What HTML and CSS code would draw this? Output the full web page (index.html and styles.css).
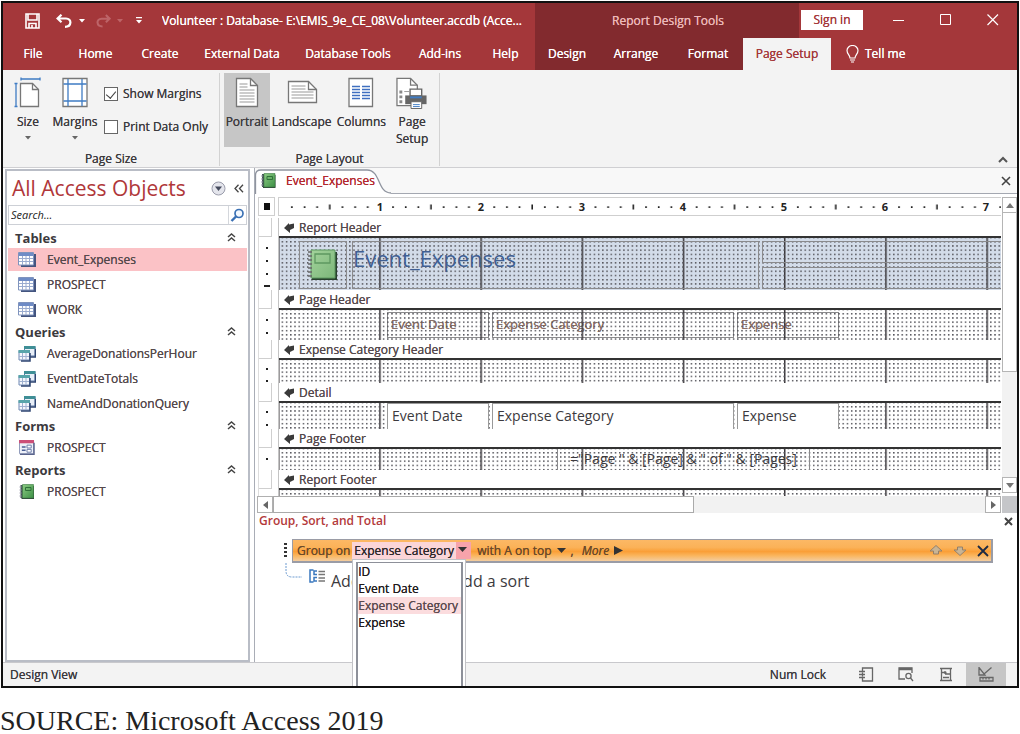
FILE: index.html
```html
<!DOCTYPE html>
<html lang="en">
<head>
<meta charset="utf-8">
<title>Volunteer : Database</title>
<link rel="stylesheet" href="styles.css">
</head>
<body>
<svg class="defs" width="0" height="0" aria-hidden="true">
  <defs>
    <pattern id="dots" x="2.6" y="3" width="4.217" height="4.217" patternUnits="userSpaceOnUse"><rect width="1.5" height="1.5" fill="#55555c"/></pattern>
    <pattern id="inches" x="-1" width="101.2" height="100" patternUnits="userSpaceOnUse"><rect width="1.5" height="100" fill="#3b383b"/></pattern>
    <pattern id="ticks" x="0" width="101.2" height="18" patternUnits="userSpaceOnUse">
      <path d="M12 8.2h1.7v1.7h-1.7zM24.7 8.2h1.7v1.7h-1.7zM37.3 8.2h1.7v1.7h-1.7zM50 6.5h1.6v5h-1.6zM62.6 8.2h1.7v1.7h-1.7zM75.3 8.2h1.7v1.7h-1.7zM87.9 8.2h1.7v1.7h-1.7z" fill="#222"/>
    </pattern>
    <linearGradient id="green" x1="0" y1="0" x2="1" y2="1"><stop offset="0" stop-color="#8ccb83"/><stop offset="1" stop-color="#3c8f45"/></linearGradient>
    <linearGradient id="palegreen" x1="0" y1="0" x2="1" y2="1"><stop offset="0" stop-color="#a3d29b"/><stop offset="1" stop-color="#7cb77a"/></linearGradient>
    <symbol id="i-table" viewBox="0 0 18 15">
      <path d="M3 2h15v13H3z" fill="#44557f"/><path d="M.5.5h15v12.5H.5z" fill="#fff" stroke="#7f93bd"/>
      <path d="M1 1h14v3H1z" fill="#6f8cc6"/><path d="M1 6.5h14M1 9.5h14M4.5 4v9M8 4v9M11.500 4v9" stroke="#9aacd0" fill="none"/>
    </symbol>
    <symbol id="i-query" viewBox="0 0 18 17">
      <path d="M6.500 1.500h10.500v9.500H6.500z" fill="#e9eff8" stroke="#5a76a6"/><path d="M6 1h11.500v3H6z" fill="#3f8f96"/>
      <path d="M17.500 4v8H9" stroke="#2f4672" fill="none" stroke-width="1.500"/>
      <path d="M1 5.500h10.500v9.500H1z" fill="#f4f7fc" stroke="#6f88b3"/><path d="M.5 5h11.500v3H.5z" fill="#58a5aa"/>
      <path d="M4.500 8v7M8 8v7M1 11.500h10" stroke="#9fb1d0"/><path d="M12 8v8H3" stroke="#2f4672" fill="none" stroke-width="1.500"/>
    </symbol>
    <symbol id="i-form" viewBox="0 0 17 16">
      <path d="M.5.5h15v14H.5z" fill="#eef1f9" stroke="#8b95b8"/><path d="M0 0h16v3.500H0z" fill="#cc4f78"/>
      <path d="M16 3v12.500H1" fill="none" stroke="#5a648c" stroke-width="1.500"/>
      <path d="M3 7.500h4M3 11h4" stroke="#4a5f95" stroke-width="1.500"/><path d="M8.500 5.500h4.500v3H8.500zM8.500 10h4.500v3H8.500z" fill="#fff" stroke="#6a7aa8"/>
    </symbol>
    <symbol id="i-book" viewBox="0 0 15 15">
      <path d="M2 2h12.500v13H2z" fill="#30443a"/><path d="M1 1h3v13H1z" fill="#455" /><path d="M3 .5h11V14H3z" fill="url(#green)" stroke="#3a7a41" stroke-width=".6"/>
      <path d="M6 3.500h5.500v3H6z" fill="none" stroke="#2f7038"/><path d="M0 3h2M0 6h2M0 9h2M0 12h2" stroke="#99a"/>
    </symbol>
    <symbol id="i-up2" viewBox="0 0 9 9"><path d="M1 4l3.500-3L8 4M1 8l3.500-3L8 8" fill="none" stroke="#444" stroke-width="1.500"/></symbol>
    <symbol id="i-sec" viewBox="0 0 11 10"><path d="M0 5L5 0V1.500L10 .5V5L6 7V10z" fill="#3a3a3a"/></symbol>
  </defs>
</svg>

<main class="window">
  <header class="head">
    <div class="titlebar">
      <div class="title-left">
        <button class="qat save" aria-label="Save"><svg width="15" height="16" viewBox="0 0 15 16" fill="none" stroke="#fff" stroke-width="1.600"><path d="M1 1h13v14H1zM3 1v6h9V1M4 15v-4.500h7V15M7 12v3"/></svg></button>
        <button class="qat undo" aria-label="Undo"><svg width="16" height="14" viewBox="0 0 16 14" fill="none" stroke="#fff" stroke-width="2.200"><path d="M5.500 .7L1.500 4.500L5.500 8.300M2 4.500h8c6 0 6 8.300-1 8.300"/></svg></button>
        <button class="qat" aria-label="Undo list"><svg width="6" height="4"><path d="M0 0h6L3 3.500z" fill="#fff"/></svg></button>
        <button class="qat redo" aria-label="Redo"><svg width="15" height="14" viewBox="0 0 16 14" fill="none" stroke="#bd6468" stroke-width="2.200"><path d="M10.500 .7L14.500 4.500L10.500 8.300M14 4.500H6c-6 0-6 8.300 1 8.300"/></svg></button>
        <button class="qat" aria-label="Redo list"><svg width="6" height="4"><path d="M0 0h6L3 3.500z" fill="#bd6468"/></svg></button>
        <button class="qat more" aria-label="Customize toolbar"><svg width="6" height="7"><path d="M0 0h6v1.300H0zM0 3h6L3 6.500z" fill="#fff"/></svg></button>
        <h1 class="doc-title">Volunteer : Database- E:\EMIS_9e_CE_08\Volunteer.accdb (Acce...</h1>
      </div>
      <div class="context">Report Design Tools</div>
      <div class="title-right">
        <button class="signin">Sign in</button>
        <button class="sys" aria-label="Minimize"><svg width="12" height="12"><path d="M0 6.500h11" stroke="#fff"/></svg></button>
        <button class="sys" aria-label="Maximize"><svg width="12" height="12"><path d="M.5.5h10v10H.5z" fill="none" stroke="#fff"/></svg></button>
        <button class="sys" aria-label="Close"><svg width="12" height="12"><path d="M.5.5l10.500 10.500M11 .5L.5 11" stroke="#fff" stroke-width="1.200"/></svg></button>
      </div>
    </div>
    <nav class="tabs">
      <button>File</button><button>Home</button><button>Create</button><button>External Data</button><button>Database Tools</button><button>Add-ins</button><button>Help</button>
      <button class="dark">Design</button><button class="dark">Arrange</button><button class="dark">Format</button><button class="on">Page Setup</button>
      <button class="tell"><svg width="13" height="18" viewBox="0 0 13 18" fill="none" stroke="#fff" stroke-width="1.200"><path d="M4 13c0-3-3-4-3-7.500a5.500 5 0 0 1 11 0C12 9 9 10 9 13zM4 15h5M5 17h3"/></svg>Tell me</button>
    </nav>
  </header>

  <section class="ribbon">
    <div class="group size-group">
      <div class="tools">
        <button class="tool w-size">
          <svg width="28" height="32" viewBox="0 0 28 32" fill="none"><path d="M6.500 6.500h12l6 6v17h-18z" fill="#fff" stroke="#777" stroke-width="1.300"/><path d="M18.500 6.500v6h6" stroke="#777" stroke-width="1.300"/><path d="M7 2h19M7 .500v3M26 .500v3M2 6.500v23M.500 6.500h3M.500 29.500h3" stroke="#3f7cc4" stroke-width="1.300"/></svg>
          <span>Size</span><svg class="caret" width="6" height="4"><path d="M0 0h6L3 3.500z" fill="#666"/></svg>
        </button>
        <button class="tool w-margins">
          <svg width="26" height="32" viewBox="0 0 26 32" fill="none"><path d="M1 1.500h24v28H1z" fill="#fff" stroke="#777" stroke-width="1.300"/><path d="M6 2v27M20 2v27M1.500 7h23M1.500 24h23" stroke="#3f7cc4" stroke-width="1.300"/></svg>
          <span>Margins</span><svg class="caret" width="6" height="4"><path d="M0 0h6L3 3.500z" fill="#666"/></svg>
        </button>
        <div class="checks">
          <label><input type="checkbox" checked>Show Margins</label>
          <label><input type="checkbox">Print Data Only</label>
        </div>
      </div>
      <h2>Page Size</h2>
    </div>
    <div class="group layout-group">
      <div class="tools">
        <button class="tool w-portrait active">
          <svg width="24" height="32" viewBox="0 0 24 32" fill="none"><path d="M1.500 1.500h14l7 7v21h-21z" fill="#fff" stroke="#777" stroke-width="1.300"/><path d="M15.500 1.500v7h7" stroke="#777" stroke-width="1.300"/><path d="M4.500 7h8M4.500 10h8M4.500 13h15M4.500 16h15M4.500 19h15M4.500 22h15M4.500 25h15" stroke="#999"/></svg>
          <span>Portrait</span>
        </button>
        <button class="tool w-landscape">
          <svg width="32" height="32" viewBox="0 0 32 32" fill="none"><path d="M2.500 4.500h20l8 8v13h-28z" fill="#fff" stroke="#777" stroke-width="1.300"/><path d="M22.500 4.500v8h8" stroke="#777" stroke-width="1.300"/><path d="M5.500 9h14M5.500 12h14M5.500 15h22M5.500 18h22M5.500 21h22" stroke="#999"/></svg>
          <span>Landscape</span>
        </button>
        <button class="tool w-columns">
          <svg width="26" height="32" viewBox="0 0 26 32" fill="none"><path d="M1 1.500h23.500v28H1z" fill="#fff" stroke="#777" stroke-width="1.300"/><path d="M4 9.500h8M4 12.500h8M4 15.500h8M4 18.500h8M4 21.500h8M14 9.500h8M14 12.500h8M14 15.500h8M14 18.500h8M14 21.500h8" stroke="#3f6fc0" stroke-width="1.400"/></svg>
          <span>Columns</span>
        </button>
        <button class="tool w-setup">
          <svg width="34" height="32" viewBox="0 0 34 33" fill="none"><path d="M1.500 1.500h14l7 7v21h-21z" fill="#fff" stroke="#777" stroke-width="1.300"/><path d="M15.500 1.500v7h7" stroke="#777" stroke-width="1.300"/><path d="M4 14h3v3H4zM4 19h3v3H4zM4 24h3v3H4z" fill="#888"/><path d="M9 15h5" stroke="#999"/><path d="M15 12.500h12v7H15z" fill="#fff" stroke="#666" stroke-width="1.400"/><path d="M10 19h22v9H10z" fill="#666"/><path d="M15 20h12v2H15z" fill="#3f7cc4"/><path d="M16 25.500h11v7H16z" fill="#fff" stroke="#666"/><path d="M18 28.500h7M18 30.500h7" stroke="#3f7cc4"/></svg>
          <span>Page<br>Setup</span>
        </button>
      </div>
      <h2>Page Layout</h2>
    </div>
    <button class="collapse" aria-label="Collapse ribbon"><svg width="10" height="7"><path d="M1 6l4-4 4 4" fill="none" stroke="#555" stroke-width="2"/></svg></button>
  </section>

  <div class="workspace">
    <aside class="nav">
      <div class="nav-head">
        <h2>All Access Objects</h2>
        <button aria-label="Choose category"><svg width="15" height="15"><circle cx="7.500" cy="7.500" r="6.500" fill="#e4e5ec" stroke="#9a9cab"/><path d="M4 5.500h7L7.500 10z" fill="#444a5c"/></svg></button>
        <button aria-label="Close pane"><svg width="10" height="9"><path d="M4.500 .700L1 4.500l3.500 3.800M9 .700L5.500 4.500 9 8.300" fill="none" stroke="#444" stroke-width="1.300"/></svg></button>
      </div>
      <div class="search">
        <input type="text" placeholder="Search..." aria-label="Search">
        <button aria-label="Search"><svg width="15" height="14"><circle cx="9" cy="5.500" r="4" fill="#f4f9ff" stroke="#3a70b4" stroke-width="1.700"/><path d="M6 8.500L1.500 13" stroke="#3a70b4" stroke-width="2.400"/></svg></button>
      </div>
      <div class="tree">
        <h3>Tables<svg width="9" height="9"><use href="#i-up2"/></svg></h3>
        <ul>
          <li class="sel"><svg width="18" height="15"><use href="#i-table"/></svg>Event_Expenses</li>
          <li><svg width="18" height="15"><use href="#i-table"/></svg>PROSPECT</li>
          <li><svg width="18" height="15"><use href="#i-table"/></svg>WORK</li>
        </ul>
        <h3>Queries<svg width="9" height="9"><use href="#i-up2"/></svg></h3>
        <ul>
          <li><svg width="18" height="17"><use href="#i-query"/></svg>AverageDonationsPerHour</li>
          <li><svg width="18" height="17"><use href="#i-query"/></svg>EventDateTotals</li>
          <li><svg width="18" height="17"><use href="#i-query"/></svg>NameAndDonationQuery</li>
        </ul>
        <h3>Forms<svg width="9" height="9"><use href="#i-up2"/></svg></h3>
        <ul><li><svg width="18" height="15"><use href="#i-form"/></svg>PROSPECT</li></ul>
        <h3>Reports<svg width="9" height="9"><use href="#i-up2"/></svg></h3>
        <ul><li><svg width="18" height="15"><use href="#i-book"/></svg>PROSPECT</li></ul>
      </div>
    </aside>

    <section class="main">
      <div class="doc-tabs">
        <button class="doc-tab">
          <svg class="tab-shape" width="136" height="25"><path d="M.5 25V6Q.5 1 6 1H112C126 1 122 24 136 24V25z" fill="#fff"/><path d="M.5 25V6Q.5 1 6 1H112C126 1 122 24 136 24" fill="none" stroke="#8f949f" stroke-width="1.300"/></svg>
          <svg class="tab-icon" width="15" height="15"><use href="#i-book"/></svg><span>Event_Expenses</span>
        </button>
        <button class="doc-close" aria-label="Close document"><svg width="10" height="10"><path d="M1 1l8 8M9 1L1 9" stroke="#444" stroke-width="1.600"/></svg></button>
      </div>

      <div class="designer">
        <div class="canvas">
          <div class="ruler-row">
            <div class="corner"></div>
            <svg class="ruler" height="18"><rect width="100%" height="18" fill="url(#ticks)"/>
              <g class="ruler-num"><text x="101" y="13">1</text><text x="202" y="13">2</text><text x="303" y="13">3</text><text x="404" y="13">4</text><text x="505" y="13">5</text><text x="606" y="13">6</text><text x="707" y="13">7</text></g></svg>
          </div>
          <div class="sections">
            <section class="band">
              <div class="vr"><i></i><svg width="14" height="52"><path d="M7 10h2v2H7zM7 23h2v2H7zM7 36h2v2H7zM5 48h6v2H5z" fill="#222"/></svg></div>
              <div class="surface">
                <h4><svg width="11" height="10"><use href="#i-sec"/></svg>Report Header</h4>
                <div class="area a-rh">
                  <svg class="grid"><rect width="100%" height="100%" fill="url(#inches)"/><rect width="100%" height="100%" fill="url(#dots)"/></svg>
                  <div class="ctl c-logo"><svg width="30" height="32" viewBox="0 0 30 32"><path d="M4 3h25v28H4z" fill="#27402d"/><path d="M3 1h24v28H3z" fill="url(#palegreen)" stroke="#5d9860"/><path d="M7 5h15v9H7z" fill="none" stroke="#5d9860" stroke-width="1.300"/><path d="M0 3h4M0 7h4M0 11h4M0 15h4M0 19h4M0 23h4M0 27h4" stroke="#666" stroke-width="1.500"/></svg></div>
                  <div class="ctl c-title">Event_Expenses</div>
                  <div class="ctl c-date"></div>
                  <div class="ctl c-time"></div>
                </div>
              </div>
            </section>
            <section class="band">
              <div class="vr"><i></i><svg width="14" height="30"><path d="M7 10h2v2H7zM7 23h2v2H7z" fill="#222"/></svg></div>
              <div class="surface">
                <h4><svg width="11" height="10"><use href="#i-sec"/></svg>Page Header</h4>
                <div class="area a-ph">
                  <div class="ctl lbl f1">Event Date</div><div class="ctl lbl f2">Expense Category</div><div class="ctl lbl f3">Expense</div>
                  <svg class="grid"><rect width="100%" height="100%" fill="url(#inches)"/><rect width="100%" height="100%" fill="url(#dots)"/></svg>
                </div>
              </div>
            </section>
            <section class="band">
              <div class="vr"><i></i><svg width="14" height="23"><path d="M7 9h2v2H7zM7 21h2v2H7z" fill="#222"/></svg></div>
              <div class="surface">
                <h4><svg width="11" height="10"><use href="#i-sec"/></svg>Expense Category Header</h4>
                <div class="area a-eh"><svg class="grid"><rect width="100%" height="100%" fill="url(#inches)"/><rect width="100%" height="100%" fill="url(#dots)"/></svg></div>
              </div>
            </section>
            <section class="band">
              <div class="vr"><i></i><svg width="14" height="26"><path d="M7 9h2v2H7zM7 22h2v2H7z" fill="#222"/></svg></div>
              <div class="surface">
                <h4><svg width="11" height="10"><use href="#i-sec"/></svg>Detail</h4>
                <div class="area a-dt">
                  <svg class="grid"><rect width="100%" height="100%" fill="url(#inches)"/><rect width="100%" height="100%" fill="url(#dots)"/></svg>
                  <div class="ctl box f1">Event Date</div><div class="ctl box f2">Expense Category</div><div class="ctl box f3">Expense</div>
                </div>
              </div>
            </section>
            <section class="band">
              <div class="vr"><i></i><svg width="14" height="21"><path d="M7 10h2v2H7z" fill="#222"/></svg></div>
              <div class="surface">
                <h4><svg width="11" height="10"><use href="#i-sec"/></svg>Page Footer</h4>
                <div class="area a-pf">
                  <svg class="grid"><rect width="100%" height="100%" fill="url(#inches)"/><rect width="100%" height="100%" fill="url(#dots)"/></svg>
                  <div class="ctl c-page">="Page " &amp; [Page] &amp; " of " &amp; [Pages]</div>
                </div>
              </div>
            </section>
            <section class="band">
              <div class="vr"><i></i></div>
              <div class="surface">
                <h4><svg width="11" height="10"><use href="#i-sec"/></svg>Report Footer</h4>
                <div class="area a-rf"><svg class="grid"><rect width="100%" height="100%" fill="url(#inches)"/><rect width="100%" height="100%" fill="url(#dots)"/></svg></div>
              </div>
            </section>
          </div>
        </div>
        <div class="vscroll">
          <button aria-label="Scroll up"><svg width="8" height="5"><path d="M0 5h8L4 0z" fill="#777"/></svg></button>
          <div class="vthumb"></div><div class="vtrack"></div>
          <button aria-label="Scroll down"><svg width="8" height="5"><path d="M0 0h8L4 5z" fill="#777"/></svg></button>
        </div>
        <div class="hscroll">
          <button aria-label="Scroll left"><svg width="5" height="8"><path d="M5 0v8L0 4z" fill="#666"/></svg></button>
          <div class="hthumb"></div><div class="htrack"></div>
          <button aria-label="Scroll right"><svg width="5" height="8"><path d="M0 0v8l5-4z" fill="#666"/></svg></button>
        </div>
        <div class="scroll-corner"></div>
      </div>

      <section class="sorting">
        <div class="sort-head"><h2>Group, Sort, and Total</h2><button aria-label="Close"><svg width="9" height="9"><path d="M1 1l7 7M8 1L1 8" stroke="#444" stroke-width="2"/></svg></button></div>
        <div class="level">
          <svg class="grip" width="4" height="18"><path d="M0 1h3v2H0zM0 5h3v2H0zM0 9h3v2H0zM0 13h3v2H0z" fill="#333"/></svg>
          <div class="level-bar">
            <label for="field">Group on</label>
            <div class="combo">
              <select id="field"><option>Expense Category</option></select>
              <svg class="combo-arrow" width="9" height="5"><path d="M0 0h9L4.500 5z" fill="#333"/></svg>
              <div class="popup">
                <ul role="listbox" aria-label="Fields">
                  <li role="option">ID</li><li role="option">Event Date</li><li role="option" class="hot" aria-selected="true">Expense Category</li><li role="option">Expense</li>
                </ul>
              </div>
            </div>
            <button class="order">with A on top <svg width="9" height="5"><path d="M0 0h9L4.500 5z" fill="#333"/></svg></button>
            <span class="comma">,</span>
            <button class="more-btn"><em>More</em> <svg width="9" height="9"><path d="M0 0v9l9-4.500z" fill="#333"/></svg></button>
            <span class="level-actions">
              <button aria-label="Move up"><svg width="14" height="11"><path d="M7 .500L13 6H9.500v3h-5V6H1z" fill="#c9b494" stroke="#94806a"/></svg></button>
              <button aria-label="Move down"><svg width="14" height="11"><path d="M7 10.500L13 5H9.500V2h-5v3H1z" fill="#c9b494" stroke="#94806a"/></svg></button>
              <button aria-label="Delete"><svg width="12" height="12"><path d="M1 1l10 10M11 1L1 11" stroke="#1d2a44" stroke-width="1.800"/></svg></button>
            </span>
          </div>
        </div>
        <div class="add-row">
          <svg class="elbow" width="18" height="18"><path d="M1 0v8q0 6 6 6h10" fill="none" stroke="#6d9bd0" stroke-dasharray="2 1"/></svg>
          <svg class="add-icon" width="17" height="15"><path d="M4.500 1H1v12h3.500M8 2H5v3.500h3M8 8.500H5V12h3" fill="none" stroke="#3a78bf" stroke-width="1.500"/><path d="M9.500 2.500H16M9.500 5.500H16M9.500 9H16M9.500 12H16" stroke="#777" stroke-width="1.400"/></svg>
          <button class="add-group">Add a group</button><button class="add-sort">Add a sort</button>
        </div>
      </section>
    </section>
  </div>

  <footer class="status">
    <span>Design View</span>
    <span class="numlock">Num Lock</span>
    <button class="view" aria-label="Report View"><svg width="15" height="15" fill="none" stroke="#666" stroke-width="1.300"><path d="M3.500 4V1h10v13h-10v-3M3.500 5.500v4M0 4.500h6M0 7.500h6M0 10.500h6"/></svg></button>
    <button class="view" aria-label="Print Preview"><svg width="16" height="15" fill="none" stroke="#666" stroke-width="1.300"><path d="M7 12H1V1h13v5"/><path d="M1 2h13" stroke-width="2.500"/><circle cx="10.500" cy="9" r="2.600"/><path d="M12.500 11l2.500 3"/></svg></button>
    <button class="view" aria-label="Layout View"><svg width="14" height="15" fill="none" stroke="#666" stroke-width="1.300"><path d="M1 1.500h12M1 13.500h12M2.500 1v13M11.500 1v13M2.500 5.500h5M6 4v3M6 7h6M4 10.500h6"/></svg></button>
    <button class="view on" aria-label="Design View"><svg width="16" height="15" fill="none" stroke="#666" stroke-width="1.300"><path d="M1 .500V8h6zM6 7l7.500-6.500M2 10.500h13v3.500H2zM5 11v1.500M8 11v1.500M11 11v1.500"/></svg></button>
  </footer>
</main>
<p class="source">SOURCE: Microsoft Access 2019</p>
</body>
</html>
```

FILE: styles.css
```css
* { box-sizing: border-box; }
body {
  margin: 0;
  min-height: 100vh;
  display: flex;
  flex-direction: column;
  background: #fff;
  color: #3c3a3e;
  font: 400 12px/16px "Open Sans", "Noto Sans", sans-serif;
}
h1, h2, h3, h4, p, ul { margin: 0; padding: 0; font: inherit; }
ul { list-style: none; }
button { margin: 0; padding: 0; border: 0; background: none; color: inherit; font: inherit; text-shadow: inherit; white-space: nowrap; }
svg { display: block; flex: none; }
.defs { position: absolute; }

.window {
  flex: 1;
  display: flex;
  flex-direction: column;
  margin: 1px;
  border: 2px solid #111;
  overflow: hidden;
  background: #f3f3f3;
}
/* Firmer strokes for the small interface text */
.titlebar, .tabs, .ribbon, .tree, .surface h4, .doc-tab, .sort-head, .level, .status { text-shadow: 0 0 0 currentColor; }

/* Title bar and ribbon tabs */
.head { background: #a4373a; color: #fff; }
.titlebar { display: flex; height: 35px; }
.title-left { display: flex; align-items: center; width: 532px; padding-left: 22px; }
.qat { display: flex; align-items: center; }
.undo { margin: 0 7px 0 16px; }
.redo { margin: 0 6px 0 11px; }
.more { margin: 0 20px 0 13px; }
.doc-title { overflow: hidden; white-space: nowrap; }
.context { display: flex; align-items: center; justify-content: center; width: 264px; background: #822a2e; color: #ecb9ba; padding-left: 2px; }
.title-right { flex: 1; display: flex; align-items: center; }
.signin { width: 62px; height: 20px; margin: 0 12px 2px 2px; background: #fff; color: #a4373a; }
.sys { flex: 1; display: flex; justify-content: center; padding-bottom: 2px; }
.tabs { display: grid; grid-template-columns: 60px 65px 64px 100px 112px 72px 59px 64px 74px 70px 88px 1fr; height: 32px; }
.tabs .dark { background: #822a2e; }
.tabs .on { background: #f3f3f3; color: #a4373a; }
.tabs .tell { display: flex; align-items: center; gap: 6px; padding-left: 15px; }

/* Ribbon */
.ribbon { display: flex; height: 98px; padding-top: 3px; border-bottom: 1px solid #cfcfd2; }
.group { display: flex; flex-direction: column; border-right: 1px solid #d2d2d2; margin-bottom: 1px; }
.group h2 { text-align: center; line-height: 14px; }
.size-group { width: 217px; }
.layout-group { width: 220px; }
.tools { display: flex; flex: 1; padding: 0 4px; }
.size-group .tools { padding: 0 2px; }
.tool { display: flex; flex-direction: column; align-items: center; height: 74px; padding-top: 4px; }
.tool span { line-height: 17px; margin-top: 4px; }
.tool .caret { margin-top: 6px; }
.active { background: #c6c6c6; }
.w-size { width: 46px; }
.w-margins { width: 48px; }
.w-portrait { width: 46px; }
.w-landscape { width: 64px; }
.w-columns { width: 56px; }
.w-setup { width: 46px; }
.checks { display: flex; flex-direction: column; gap: 17px; padding: 13px 0 0 5px; }
.checks label { display: flex; align-items: center; gap: 5px; white-space: nowrap; }
.checks input { position: relative; appearance: none; width: 14px; height: 14px; margin: 0; border: 1px solid #666; background: #fff; }
.checks input:checked::after { content: ""; position: absolute; left: 3px; top: 1px; width: 5px; height: 8px; border: solid #444; border-width: 0 1px 1px 0; transform: rotate(40deg); }
.collapse { margin: auto 9px 4px auto; }

/* Navigation pane */
.workspace { flex: 1; display: flex; border-bottom: 1px solid #c8c8cc; background: #fff; }
.nav { flex: none; width: 245px; margin: 1px 4px 0 2px; border: 2px solid #b9bdc6; background: #fff; }
.nav-head { display: flex; align-items: center; height: 34px; padding: 0 4px 0 5px; gap: 8px; }
.nav-head h2 { flex: 1; font-size: 21px; font-weight: 400; color: #b0373a; white-space: nowrap; }
.search { display: flex; height: 20px; margin: 0 1px 3px; border: 1px solid #cdd0d6; }
.search input { flex: 1; min-width: 0; border: 0; padding: 0 2px; font: italic 11px/16px "Open Sans", sans-serif; color: #222; outline: 0; }
.search input::placeholder { color: #222; }
.search button { width: 18px; border-left: 1px solid #d4d7dc; padding-left: 1px; }
.tree h3 { display: flex; align-items: center; justify-content: space-between; height: 19px; padding: 0 12px 0 8px; font-weight: 700; font-size: 13px; text-shadow: none; }
.tree li { display: flex; align-items: center; gap: 11px; height: 23px; margin: 1px; padding-left: 10px; color: #55494c; }
.tree ul { display: flow-root; }
.tree li + li { margin-top: 2px; }
.tree .sel { background: #fbc2c6; }

/* Document area */
.main { flex: 1; min-width: 0; display: flex; flex-direction: column; border-left: 1px solid #a9adb6; }
.doc-tabs { display: flex; justify-content: space-between; align-items: center; height: 26px; border-bottom: 1px solid #a4a8b1; background: #f8f8f8; }
.doc-tab { position: relative; display: flex; align-items: center; gap: 10px; width: 136px; height: 25px; padding-left: 6px; color: #b3282d; }
.tab-shape { position: absolute; left: 0; top: 1px; }
.tab-icon, .doc-tab span { position: relative; }
.doc-close { margin-right: 6px; }
.designer { display: grid; grid-template-columns: minmax(0, 1fr) 15px; grid-template-rows: auto 17px; padding-top: 3px; }
.canvas { padding: 0 1px 0 3px; }
.ruler-row { display: flex; gap: 3px; height: 19px; margin-bottom: 2px; }
.corner { width: 17px; border: 1px solid #cfcfcf; display: grid; place-items: center; }
.corner::before { content: ""; width: 6px; height: 7px; background: #111; }
.ruler { flex: 1; min-width: 0; height: 19px; border: 1px solid #cfcfcf; border-right: 0; }
.ruler-num { font: 700 11px "Open Sans", sans-serif; text-anchor: middle; fill: #222; }
.band { display: flex; gap: 4px; }
.vr { width: 16px; border-left: 1px solid #ddd; }
.vr i { display: block; height: 19px; border: solid #cfcfcf; border-width: 0 1px 1px 0; margin-right: 2px; }
.surface { flex: 1; min-width: 0; border-left: 1px solid #c4c4c4; }
.surface h4 { display: flex; align-items: center; gap: 4px; height: 18px; padding: 2px 0 0 5px; color: #55494c; }
.area { position: relative; overflow: hidden; border-top: 2px solid #333; background: #fff; }
.grid { position: absolute; inset: 0; width: 100%; height: 100%; }
.a-rh { height: 54px; background: #d3dce9; }
.a-ph { height: 32px; }
.a-eh { height: 25px; }
.a-dt { height: 28px; }
.a-pf { height: 23px; }
.a-rf { height: 8px; }
.ctl { position: absolute; white-space: nowrap; border: 1px solid #8a8a8c; }
.c-logo { left: 20px; top: 3px; width: 48px; height: 48px; padding: 7px 0 0 8px; }
.c-title { left: 73px; top: 3px; width: 407px; height: 48px; font-size: 22px; line-height: 32px; font-weight: 400; color: #3f5f93; }
.c-date { left: 483px; right: -2px; top: 3px; height: 22px; }
.c-time { left: 483px; right: -2px; top: 29px; height: 22px; }
.f1 { left: 108px; width: 102px; }
.f2 { left: 213px; width: 242px; }
.f3 { left: 458px; width: 102px; }
.lbl { top: 2px; height: 26px; padding-left: 3px; font-size: 13px; line-height: 22px; color: #8b6f66; text-shadow: 0 0 0 currentColor; }
.box { top: 0; height: 27px; padding-left: 4px; border-color: #999; background: #fff; font-size: 14px; line-height: 24px; }
.c-page { left: 278px; top: 0; width: 253px; height: 24px; text-align: center; font-size: 14px; line-height: 20px; border-width: 0 1px; }
.vscroll { display: flex; flex-direction: column; margin-bottom: 3px; background: #f2f2f2; }
.vscroll button { display: grid; place-items: center; height: 16px; border: 1px solid #b5b5b5; background: #fff; }
.vthumb { flex: 3; background: #fff; border: solid #b5b5b5; border-width: 0 1px 1px; }
.vtrack { flex: 2; }
.hscroll { display: flex; margin: 0 1px 0 2px; background: #f2f2f2; }
.hscroll button { display: grid; place-items: center; width: 16px; border: 1px solid #b0b0b0; background: #fff; }
.hthumb { flex: 59; border: 1px solid #aaa; background: #fff; }
.htrack { flex: 41; }
.scroll-corner { background: #c5c6c9; }

/* Group, Sort, and Total */
.sorting { padding: 0 4px; }
.sort-head { display: flex; justify-content: space-between; align-items: center; height: 16px; margin-bottom: 10px; color: #b3393a; }
.sort-head h2 { font-weight: 600; text-shadow: none; }
.level { display: flex; align-items: center; gap: 4px; margin: 0 20px 0 25px; }
.level-bar { flex: 1; min-width: 0; display: flex; align-items: center; height: 24px; padding: 0 2px 0 4px; border: 2px solid #9a9ca6; border-width: 1px 2px 2px 1px; background: linear-gradient(#fcb865, #fbb258 35%, #fa9f37 55%, #fab65f 75%, #f3cda0); color: #6b4a2a; }
.combo { position: relative; display: flex; align-items: center; width: 119px; margin: 0 6px 0 2px; }
.combo select { appearance: none; width: 100%; height: 17px; padding: 0 0 0 2px; border: 0; border-radius: 0; background: linear-gradient(90deg, #fbd5d8 104px, #f7a3ab 104px); color: #2c2729; font: inherit; line-height: 17px; text-shadow: inherit; }
.combo-arrow { position: absolute; right: 4px; top: 5px; }
.popup { position: absolute; left: 0; top: 17px; z-index: 3; width: 114px; height: 140px; padding: 2px 2px 0 3px; background: #fff; border: 1px solid #c2c2c6; }
.popup ul { height: 140px; border: 2px solid #8d9099; border-width: 1px 2px; color: #1f1b1d; }
.popup li { height: 17px; line-height: 17px; white-space: nowrap; }
.popup .hot { background: #fbdcde; color: #5a4a4e; }
.order, .more-btn { display: flex; align-items: center; gap: 5px; }
.comma { margin: 0 8px 0 5px; }
.level-actions { display: flex; align-items: center; gap: 10px; margin-left: auto; }
.add-row { display: flex; align-items: flex-start; padding-left: 26px; }
.elbow { margin-right: 6px; }
.add-icon { margin: 6px 5px 0 0; }
.add-row button { font-size: 16px; line-height: 22px; margin-top: 7px; }
.add-group { width: 122px; text-align: left; }

/* Status bar */
.status { display: flex; align-items: center; height: 23px; padding: 0 11px 0 7px; background: #f3f3f3; }
.numlock { margin: 0 20px 0 auto; }
.view { display: grid; place-items: center; width: 40px; height: 23px; }
.view.on { background: #c6c6c6; }

.source { padding-top: 19px; font: 28px/26px "Liberation Serif", serif; color: #222; }
```
